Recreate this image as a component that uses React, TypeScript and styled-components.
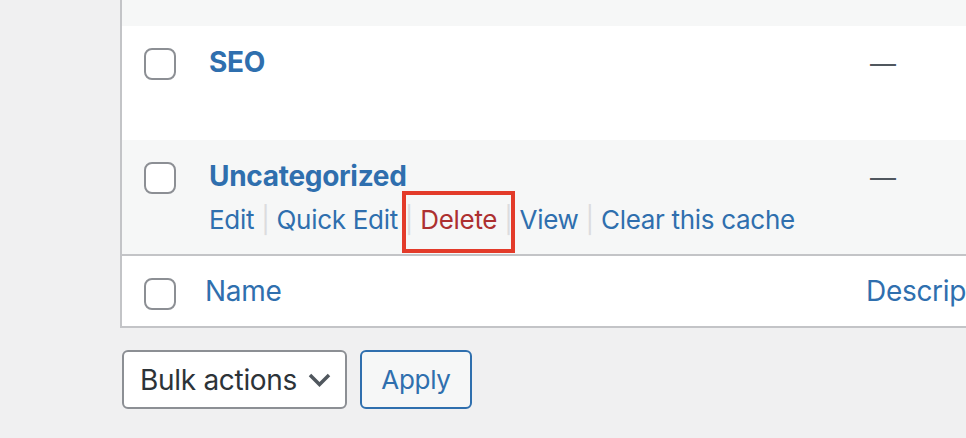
import React from 'react';
import styled, { createGlobalStyle } from 'styled-components';

const GlobalStyle = createGlobalStyle`
    html, body {
        margin: 0;
        padding: 0;
        background: #f0f0f1;
        overflow: hidden;
    }
    body {
        font-family: Inter, "Liberation Sans", sans-serif;
        color: #3c434a;
        letter-spacing: -0.3px;
    }
`;

const LINK = '#2f6fae';

export default function App() {
    return (
        <>
            <GlobalStyle />
            <Page>
                <TableWrap>
                    <Row $alt $height={26} />
                    <Row $height={114}>
                        <CheckCell><Checkbox /></CheckCell>
                        <NameCell>
                            <RowTitle>SEO</RowTitle>
                        </NameCell>
                        <DescCell><Dash>—</Dash></DescCell>
                    </Row>
                    <Row $alt $height={114}>
                        <CheckCell><Checkbox /></CheckCell>
                        <NameCell>
                            <RowTitle>Uncategorized</RowTitle>
                            <RowActions>
                                <ActionLink>Edit</ActionLink>
                                <Sep>|</Sep>
                                <ActionLink>Quick Edit</ActionLink>
                                <Sep>|</Sep>
                                <DeleteWrap>
                                    <ActionLink $danger>Delete</ActionLink>
                                    <Highlight />
                                </DeleteWrap>
                                <Sep>|</Sep>
                                <ActionLink>View</ActionLink>
                                <Sep>|</Sep>
                                <ActionLink>Clear this cache</ActionLink>
                            </RowActions>
                        </NameCell>
                        <DescCell><Dash>—</Dash></DescCell>
                    </Row>
                    <FootRow>
                        <CheckCell><Checkbox /></CheckCell>
                        <FootHead>Name</FootHead>
                        <FootHead>Description</FootHead>
                    </FootRow>
                </TableWrap>
                <BulkBar>
                    <Select>
                        Bulk actions
                        <svg width="23" height="14" viewBox="0 0 23 14" fill="none">
                            <path d="M2 2l9.5 9.5L21 2" stroke="#50575e" strokeWidth="3.5" />
                        </svg>
                    </Select>
                    <ApplyButton>Apply</ApplyButton>
                </BulkBar>
            </Page>
        </>
    );
}

const Page = styled.div`
    padding-left: 120px;
    width: 1200px;
`;

const TableWrap = styled.div`
    border-left: 2px solid #c3c4c7;
    border-bottom: 2px solid #c3c4c7;
    background: #fff;
`;

const Row = styled.div<{ $alt?: boolean; $height: number }>`
    display: grid;
    grid-template-columns: 67px 661px 1fr;
    height: ${p => p.$height}px;
    background: ${p => (p.$alt ? '#f6f7f7' : '#fff')};
    box-sizing: border-box;
`;

const FootRow = styled.div`
    display: grid;
    grid-template-columns: 67px 661px 1fr;
    height: 72px;
    border-top: 2px solid #c3c4c7;
    box-sizing: border-box;
    background: #fff;
`;

const CheckCell = styled.div`
    padding: 22px 0 0 22px;
`;

const Checkbox = styled.div`
    width: 32px;
    height: 32px;
    box-sizing: border-box;
    border: 2px solid #8c8f94;
    border-radius: 8px;
    background: #fff;
`;

const NameCell = styled.div`
    padding: 16px 20px 0 20px;
    display: flex;
    flex-direction: column;
`;

const RowTitle = styled.a`
    font-size: 28px;
    line-height: 40px;
    font-weight: 700;
    color: ${LINK};
`;

const RowActions = styled.div`
    display: flex;
    align-items: center;
    font-size: 26px;
    line-height: 36px;
    margin-top: 6px;
    white-space: nowrap;
`;

const ActionLink = styled.a<{ $danger?: boolean }>`
    color: ${p => (p.$danger ? '#ad3030' : LINK)};
`;

const Sep = styled.span`
    color: #dcdcde;
    margin: 0 7px;
`;

const DeleteWrap = styled.span`
    position: relative;
`;

const Highlight = styled.span`
    position: absolute;
    left: -18px;
    right: -18px;
    top: -11px;
    bottom: -15px;
    border: 4px solid #e33b2a;
`;

const DescCell = styled.div`
    padding: 18px 20px 0 20px;
`;

const Dash = styled.span`
    font-size: 26px;
    line-height: 40px;
    color: #50575e;
`;

const FootHead = styled.a`
    padding: 15px 16px 0 16px;
    font-size: 28px;
    line-height: 40px;
    color: ${LINK};
    white-space: nowrap;
`;

const BulkBar = styled.div`
    display: flex;
    gap: 13px;
    padding: 22px 0 0 2px;
`;

const Select = styled.div`
    display: flex;
    align-items: center;
    justify-content: space-between;
    width: 225px;
    height: 59px;
    box-sizing: border-box;
    padding: 0 14px 0 16px;
    border: 2px solid #8c8f94;
    border-radius: 6px;
    background: #fff;
    font-size: 28px;
    color: #2c3338;
`;

const ApplyButton = styled.div`
    display: flex;
    align-items: center;
    justify-content: center;
    width: 112px;
    height: 59px;
    box-sizing: border-box;
    border: 2px solid #2f6fae;
    border-radius: 6px;
    background: #f6f7f7;
    font-size: 26px;
    color: ${LINK};
`;
